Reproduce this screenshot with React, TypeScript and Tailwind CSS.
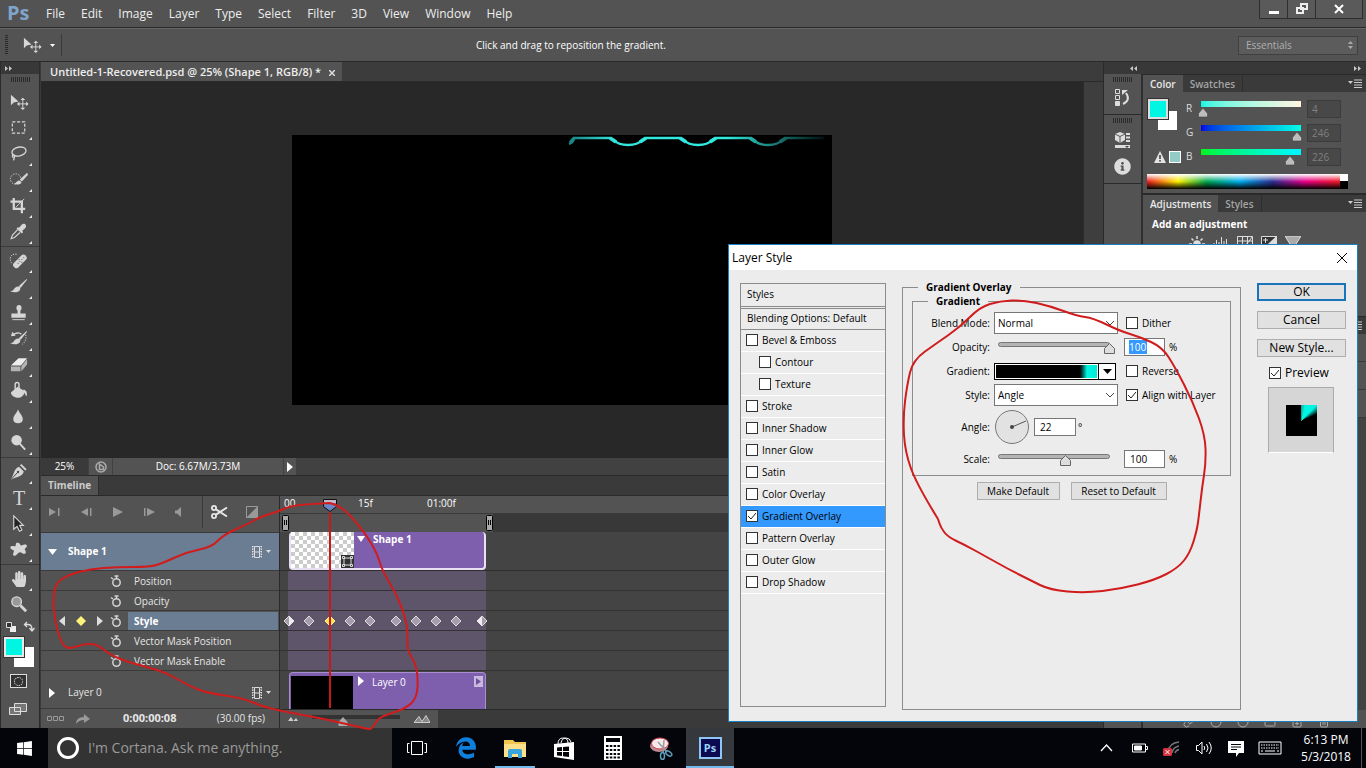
import { useState } from "react";
import type { ReactNode } from "react";
import { FaHandPaper, FaWindows, FaInfoCircle } from "react-icons/fa";
import { FaEdgeLegacy } from "react-icons/fa6";
import { Link, Trash2, Folder, FilePlus, Circle } from "lucide-react";

const menus = ["File", "Edit", "Image", "Layer", "Type", "Select", "Filter", "3D", "View", "Window", "Help"];

const effects = [
  { name: "Bevel & Emboss", sub: false },
  { name: "Contour", sub: true },
  { name: "Texture", sub: true },
  { name: "Stroke", sub: false },
  { name: "Inner Shadow", sub: false },
  { name: "Inner Glow", sub: false },
  { name: "Satin", sub: false },
  { name: "Color Overlay", sub: false },
  { name: "Gradient Overlay", sub: false },
  { name: "Pattern Overlay", sub: false },
  { name: "Outer Glow", sub: false },
  { name: "Drop Shadow", sub: false },
];

const tracks = ["Position", "Opacity", "Style", "Vector Mask Position", "Vector Mask Enable"];
const keyframes = [9, 29, 50, 70, 90, 116, 136, 156, 176, 202];

const leftLoop = [
  [330, 503], [338, 505], [350, 515], [365, 533], [377, 553], [382, 570], [395, 592], [403, 610], [408, 630],
  [407, 650], [415, 662], [418, 677], [417, 697], [407, 708], [383, 716], [377, 720], [372, 729], [367, 729],
  [330, 720], [297, 714], [263, 707], [243, 698], [207, 693], [187, 685], [167, 673], [147, 667], [128, 662],
  [110, 655], [97, 644], [83, 644], [70, 649], [62, 645], [55, 622], [53, 598], [56, 583], [68, 575], [90, 569],
  [117, 567], [150, 567], [163, 563], [187, 552], [212, 547], [223, 535], [250, 523], [260, 517], [277, 512],
  [290, 506], [310, 504], [330, 503],
];

const rightLoop = [
  [938, 519], [917, 485], [905, 452], [903, 418], [907, 385], [913, 360], [937, 343], [960, 327], [980, 307],
  [1000, 301], [1023, 300], [1050, 306], [1077, 316], [1093, 318], [1120, 331], [1140, 337], [1162, 347],
  [1175, 367], [1193, 402], [1205, 435], [1206, 462], [1202, 488], [1199, 515], [1197, 530], [1190, 553],
  [1178, 568], [1155, 580], [1120, 589], [1085, 593], [1050, 590], [1030, 580], [1010, 570], [985, 556],
  [965, 545], [948, 537], [941, 528], [938, 519],
];

// joins the points with curves through their midpoints
function smooth(points: number[][]) {
  let d = `M${points[0][0]} ${points[0][1]}`;
  for (let i = 1; i < points.length - 1; i++) {
    const [x, y] = points[i];
    const [nx, ny] = points[i + 1];
    d += ` Q${x} ${y} ${(x + nx) / 2} ${(y + ny) / 2}`;
  }
  const last = points[points.length - 1];
  return d + ` L${last[0]} ${last[1]}`;
}

const brush = (
  <>
    <path d="M18.500 2 10.500 9.500 12 11.500 19 3z" />
    <path d="M10 10c-3 0-4 1.500-5 3-1 1.200-2.500 1.600-4 1.800 4 2 8.500 1.600 10.200-.6.900-1.200.8-3-.2-4.200z" />
  </>
);

type Tool = { name: string; icon: ReactNode; plain?: boolean };

const moveIcon = (
  <>
    <path d="M2 3v11l3-3 5-1z" />
    <path d="M14.500 7v11M9 12.500h11" stroke="currentColor" strokeWidth="1" />
    <path d="M14.500 6l2.500 2.500h-5zM14.500 19l2.500-2.500h-5zM8.500 12.500l2.500-2.500v5zM20.500 12.500l-2.500-2.500v5z" />
  </>
);

const toolGroups: Tool[][] = [
  [
    { name: "Move", plain: true, icon: moveIcon },
    {
      name: "Marquee",
      icon: <rect x="3.500" y="4" width="13" height="12" fill="none" stroke="currentColor" strokeWidth="1.300" strokeDasharray="3.200 1.800" />,
    },
    {
      name: "Lasso",
      icon: (
        <g fill="none" stroke="currentColor" strokeWidth="1.400">
          <ellipse cx="10.500" cy="8" rx="7.500" ry="4.600" transform="rotate(-12 10 8)" />
          <path d="M5 11c-2 .5-2 3 0 3 1.500 0 1.500-2.500-.5-2.500M5.500 14c0 1.500 0 2.500-1 3" />
        </g>
      ),
    },
    {
      name: "Quick Selection",
      icon: (
        <>
          <circle cx="7" cy="9.500" r="5.500" fill="none" stroke="currentColor" strokeDasharray="1.400 1.400" />
          <path d="M19 3l-7.500 7 2 2L20 5z" />
          <path d="M11 11c-2.500 0-3 2-5.500 3.500 3.500 1.500 7 .7 7.700-1.300z" />
        </>
      ),
    },
    {
      name: "Crop",
      icon: (
        <>
          <path d="M5 2v11.500h12M1.500 6h12v12" fill="none" stroke="currentColor" strokeWidth="2.400" />
          <path d="M7 12L16 3" stroke="currentColor" />
        </>
      ),
    },
    {
      name: "Eyedropper",
      icon: (
        <>
          <path d="M13.500 2.500l-3 3.500-1.500-.5-1 1.500 5.500 5 1.200-1.200-.7-1.500 3.200-3c2.200-3-1.200-6-3.700-3.800z" />
          <path d="M9 8l-5.500 6-1.200 3.500 3.500-1.300L11.500 11" fill="none" stroke="currentColor" strokeWidth="1.200" />
        </>
      ),
    },
  ],
  [
    {
      name: "Healing Brush",
      icon: (
        <>
          <rect x="2.500" y="7" width="17" height="6.500" rx="2.800" transform="rotate(-45 12 10)" />
          <path d="M8 3.500C3 2.500.5 6 1.500 10c.3 2 1.300 3 2 3.500" fill="none" stroke="currentColor" strokeDasharray="1.300 1.300" />
          <path d="M9 13h1M11 11h1M13 9h1M15 7h1M13 12h1M10 9h1" stroke="#555" />
        </>
      ),
    },
    { name: "Brush", icon: brush },
    {
      name: "Clone Stamp",
      icon: (
        <>
          <path d="M9 8c-2-2-1.500-6 1.500-6S14 6 12 8v3h5.500v4.500h-15V11H9z" />
          <path d="M3.500 17.500h13" stroke="currentColor" />
        </>
      ),
    },
    {
      name: "History Brush",
      icon: (
        <>
          {brush}
          <path d="M4 6.500c3-3 7-3 9-1" fill="none" stroke="currentColor" strokeWidth="1.500" />
          <path d="M2 7.500l1.500-4.500 3.500 4z" />
          <path d="M17.500 6c1.200 4-.5 8-3.500 10" fill="none" stroke="currentColor" strokeDasharray="1.300 1.300" />
        </>
      ),
    },
    {
      name: "Eraser",
      icon: (
        <>
          <path d="M2 11L10 3.500h9L12.500 11z" fill="#eee" />
          <path d="M2 12h10v5H2zM13 11.500l6-7v5.500L13 17z" fill="#b4b4b4" />
        </>
      ),
    },
    {
      name: "Paint Bucket",
      icon: (
        <>
          <path d="M2 12l7-6 8 5c-1 3-3 6-6.500 6.500C6 18 2 15 2 12z" />
          <path d="M6.500 9V3.500c0-2.500 4-2.500 4 0V9" fill="none" stroke="currentColor" strokeWidth="1.500" />
          <path d="M15 9c3 .5 4.500 3 3.500 7-2-1-1-4-3.500-5z" />
        </>
      ),
    },
    { name: "Blur", icon: <path d="M9.500 2.500c1.500 4 5 6.500 5 10 0 3-2 4.500-5 4.500s-5-1.500-5-4.500c0-3.500 3.500-6 5-10z" /> },
    {
      name: "Dodge",
      icon: (
        <>
          <circle cx="8" cy="7.500" r="5.500" />
          <path d="M11 11l6 6.500" stroke="currentColor" strokeWidth="2" />
        </>
      ),
    },
  ],
  [
    {
      name: "Pen",
      icon: (
        <>
          <path d="M13 2l5.500 5.500-1.500 1.500L11.500 3.500z" />
          <path d="M10.500 5l5 5c-1 4-4 5-9 6.500L2 18.500 4.500 13C5.500 9 7.500 6 10.500 5z" />
          <path d="M2.500 18l6.500-7" stroke="#444" />
          <circle cx="9.500" cy="10.500" r="1.200" fill="#444" />
        </>
      ),
    },
    { name: "Type", icon: null },
    { name: "Path Selection", icon: <path d="M5 2v14l3.500-3 2.500 5 2.500-1.200-2.300-4.800H15z" fill="#222" stroke="currentColor" strokeWidth="1.200" /> },
    {
      name: "Custom Shape",
      icon: <path d="M8 3c3-1 4 2 4.500 3 2-1 6-2.500 6.300 0 .3 2-3 2.500-2 4.500 1 1.600 1.500 4-.8 4-2 0-3.500-2.500-5.500-1.500-2 1.200-2.500 3.500-5 3.500-3-.5.500-4.500-.5-5.500S1 9.500 1.500 7.500C2.300 5.500 5 7 6.500 6.500 7.700 6 6.500 3.600 8 3z" />,
    },
  ],
  [
    { name: "Hand", icon: null },
    {
      name: "Zoom",
      plain: true,
      icon: (
        <>
          <circle cx="8" cy="7" r="5" fill="#999" stroke="currentColor" strokeWidth="1.500" />
          <path d="M12 11l6 6" stroke="currentColor" strokeWidth="3" />
        </>
      ),
    },
  ],
];

function Grip() {
  return (
    <div className="flex h-[5px] gap-px">
      {Array.from({ length: 10 }, (_, i) => (
        <span key={i} className="w-px bg-[#2b2b2b]" />
      ))}
    </div>
  );
}

function ToolButton({ tool }: { tool: Tool }) {
  return (
    <button type="button" aria-label={tool.name} className="flex h-[26px] w-full items-center justify-center pl-px text-[#d6d6d6]">
      {tool.name === "Type" && <span className="w-5 text-center font-['Liberation_Serif',serif] text-xl leading-5">T</span>}
      {tool.name === "Hand" && <FaHandPaper className="h-4 w-5" />}
      {tool.icon && (
        <svg className="size-5 shrink-0" viewBox="0 0 21 21" fill="currentColor">
          {tool.icon}
        </svg>
      )}
      <svg className="mt-5 size-[3px] shrink-0" viewBox="0 0 3 3">
        {!tool.plain && <path d="M3 0v3H0z" fill="#eee" />}
      </svg>
    </button>
  );
}

function Toolbar() {
  return (
    <aside className="flex w-10 shrink-0 flex-col border-x border-[#2c2c2c] bg-[#535353]">
      <div className="flex h-3 items-center bg-[#383838] pl-1">
        <svg className="h-[5px] w-2" viewBox="0 0 8 5">
          <path d="M0 0l3 2.500L0 5zM4 0l3 2.500L4 5z" fill="#c8c8c8" />
        </svg>
      </div>
      <div className="flex h-[15px] items-start justify-center pt-[3px]">
        <Grip />
      </div>
      {toolGroups.map((group, i) => (
        <div key={i} className={i ? "mt-px border-t border-[#3a3a3a] pt-px" : ""}>
          {group.map((tool) => (
            <ToolButton key={tool.name} tool={tool} />
          ))}
        </div>
      ))}
      <div className="flex h-4 items-center justify-between px-1 pt-0.5 text-[#ddd]">
        <svg className="size-3" viewBox="0 0 12 12">
          <path d="M5 5h6v6H5z" fill="#eee" />
          <path d="M1.500 1.500h5v5h-5z" fill="#333" stroke="#ddd" />
        </svg>
        <svg className="size-3" viewBox="0 0 12 12" fill="none" stroke="currentColor" strokeWidth="1.300">
          <path d="M2 3.500h3q4 0 4 5M4 1L1.500 3.500 4 6M6.500 7L9 10l2.500-3" />
        </svg>
      </div>
      <div className="relative ml-[3px] mt-[3px] h-[30px]">
        <button type="button" aria-label="Background color" className="absolute left-2.5 top-2.5 size-5 bg-white" />
        <button type="button" aria-label="Foreground color" className="absolute left-0 top-0 size-5 border-2 border-[#e8e8e8] bg-[#00f6e2] outline outline-[#333]" />
      </div>
      <div className="mr-1 mt-[7px] flex flex-col items-center gap-3.5">
        <button type="button" aria-label="Quick mask" className="flex h-3.5 w-[17px] items-center justify-center border border-[#ddd] bg-[#333]">
          <span className="size-[9px] rounded-full border border-dotted border-white" />
        </button>
        <button type="button" aria-label="Screen mode">
          <svg className="block h-3.5 w-5" viewBox="0 0 20 14" fill="#777" stroke="#ddd">
            <path d="M6.500 1.500h12v8h-12zM1.500 5.500h11v7h-11z" />
          </svg>
        </button>
      </div>
    </aside>
  );
}

function PanelMenu() {
  return (
    <svg className="h-[9px] w-3.5" viewBox="0 0 14 9">
      <path d="M0 2h5L2.500 5z" fill="#ccc" />
      <path d="M6 1h8M6 3.500h8M6 6h8M6 8.500h8" stroke="#ccc" />
    </svg>
  );
}

function PanelTabs({ active, other }: { active: string; other: string }) {
  return (
    <div className="flex h-[18px] items-center border-t border-[#2a2a2a] bg-[#3a3a3a] pr-1 text-[10px] font-semibold leading-4">
      <button type="button" className="h-full bg-[#535353] px-[7px] text-[#e8e8e8]">{active}</button>
      <button type="button" className="h-full border-r border-[#2e2e2e] px-[7px] text-[#a4a4a4]">{other}</button>
      <span className="ml-auto"><PanelMenu /></span>
    </div>
  );
}

function ColorRow({ label, bar, start, max }: { label: string; bar: string; start: number; max: number }) {
  const [value, setValue] = useState(start);
  return (
    <div className="flex h-6 items-start">
      <label htmlFor={"color" + label} className="w-[15px] pt-0.5 text-[10px] leading-3 text-[#ddd]">{label}</label>
      <div className="relative h-4 w-[100px]">
        <div className={"mt-px h-1.5 " + bar} />
        <svg className="absolute top-2 size-2.5" style={{ left: (value / max) * 100 - 5 }} viewBox="0 0 10 10">
          <path d="M5 0l4.500 5.500V9H.5V5.500z" fill="#bdbdbd" stroke="#444" strokeWidth=".6" />
        </svg>
        <input type="range" id={"color" + label} min="0" max={max} value={value} onChange={(e) => setValue(parseInt(e.target.value))} className="absolute inset-0 w-full opacity-0" />
      </div>
      <input
        type="text"
        aria-label={label + " value"}
        value={value}
        onChange={(e) => setValue(parseInt(e.target.value) || 0)}
        className="ml-1.5 h-[18px] w-[34px] border border-[#3c3c3c] bg-[#484848] pl-1 text-[10px] text-[#808080]"
      />
    </div>
  );
}

function Dock() {
  return (
    <aside className="flex w-[263px] shrink-0 flex-col border-l border-[#2a2a2a] bg-[#2e2e2e]">
      <div className="flex h-3 items-center bg-[#383838]">
        <svg className="ml-[26px] h-[5px] w-2" viewBox="0 0 8 5">
          <path d="M3 0L0 2.500 3 5zM7 0L4 2.500 7 5z" fill="#c8c8c8" />
        </svg>
        <svg className="ml-auto mr-1 h-[5px] w-2" viewBox="0 0 8 5">
          <path d="M0 0l3 2.500L0 5zM4 0l3 2.500L4 5z" fill="#c8c8c8" />
        </svg>
      </div>
      <div className="flex min-h-0 flex-1 gap-0.5">
        <div className="flex w-[37px] flex-col bg-[#535353]">
          <div className="flex h-[41px] flex-col items-center gap-[7px] border-b border-[#2a2a2a] pt-[3px]">
            <Grip />
            <svg className="h-[17px] w-[15px]" viewBox="0 0 15 17" fill="none" stroke="#ddd">
              <path d="M.5.500h4v4h-4zM.5 6.500h4v4h-4z" />
              <path d="M.5 12.500h4v4h-4z" fill="#ddd" />
              <path d="M8 15q8-4 3-11" strokeWidth="2" />
              <path d="M7 6V1h6z" fill="#ddd" stroke="none" />
            </svg>
          </div>
          <div className="flex h-[69px] flex-col items-center gap-[9px] border-b border-[#2a2a2a] pt-[3px]">
            <Grip />
            <svg className="h-[17px] w-4 shrink-0" viewBox="0 0 16 17" fill="#ddd">
              <path d="M5 0l5 2v6l-5 3-5-3V2z" />
              <path d="M0 2l5 2.500L10 2M5 4.500V11" fill="none" stroke="#555" />
              <path d="M11 1h4v2h-4zM11 4.500h4v2h-4zM11 8h4v2h-4zM0 13h15v3H0z" />
              <path d="M10 14h4l-2 2z" fill="#444" />
            </svg>
            <FaInfoCircle className="size-[17px] shrink-0 text-[#ddd]" />
          </div>
        </div>
        <div className="flex min-w-0 flex-1 flex-col bg-[#535353]">
          <PanelTabs active="Color" other="Swatches" />
          <div className="flex h-[101px] flex-col pl-1 pt-1.5">
            <div className="flex pt-px">
              <div className="h-[72px] w-[39px]">
                <div className="relative ml-px h-[30px]">
                  <span className="absolute left-2.5 top-3 size-[19px] bg-white" />
                  <span className="absolute left-0 top-0 size-5 border-2 border-[#ddd] bg-[#00f6e2] outline outline-[#333]" />
                </div>
                <div className="ml-[7px] mt-[22px] flex items-center gap-[3px]">
                  <svg className="size-3" viewBox="0 0 12 12">
                    <path d="M6 0l6 12H0z" fill="#e4e4e4" />
                    <path d="M6 4v4M6 9v1.500" stroke="#333" strokeWidth="1.500" />
                  </svg>
                  <span className="size-3 border border-white bg-[#93ccc6]" />
                </div>
              </div>
              <div className="pt-px">
                <ColorRow label="R" start={4} max={255} bar="bg-linear-to-r from-[#00f6e2] to-[#fff6e2]" />
                <ColorRow label="G" start={246} max={255} bar="bg-linear-to-r from-[#0400e2] to-[#04ffe2]" />
                <ColorRow label="B" start={226} max={255} bar="bg-linear-to-r from-[#04f600] to-[#04f6ff]" />
              </div>
            </div>
            <div className="mt-0.5 flex h-[15px] w-[201px]">
              <div className="flex-1 bg-[linear-gradient(to_bottom,#fff,transparent_50%,#000),linear-gradient(to_right,#ed1c24,#fff200_16%,#00a651_31%,#00aeef_48%,#2e3192_65%,#ec008c_82%,#ed1c24)]" />
              <div className="w-2 bg-linear-to-b from-white from-50% to-black to-50%" />
            </div>
          </div>
          <div className="border-t border-[#2a2a2a]">
            <PanelTabs active="Adjustments" other="Styles" />
          </div>
          <div className="h-[104px] pl-[9px] pt-1">
            <h3 className="text-[10px] font-bold leading-4 text-white">Add an adjustment</h3>
            <div className="mt-1 flex gap-2 pl-[37px] text-[#ddd]">
              <svg className="size-4" viewBox="0 0 16 16" stroke="currentColor" strokeWidth="1.500">
                <circle cx="8" cy="8" r="3" fill="currentColor" />
                <path d="M8 0v3M8 13v3M0 8h3M13 8h3M2.500 2.500l2 2M13.500 2.500l-2 2M2.500 13.500l2-2M13.500 13.500l-2-2" />
              </svg>
              <svg className="size-4" viewBox="0 0 16 16" stroke="currentColor">
                <path d="M1 14V7M3.500 14V4M6 14V6M8.500 14V1M11 14V5M13.500 14V3" />
              </svg>
              <svg className="size-4" viewBox="0 0 16 16" fill="none" stroke="currentColor">
                <path d="M.5.500h15v14H.5zM5.500 0v15M10.500 0v15M0 5h16M1 13Q9 11 15 1" />
              </svg>
              <svg className="size-4" viewBox="0 0 16 16">
                <path d="M.5.500h15v14H.5z" fill="#333" stroke="currentColor" />
                <path d="M16 0v15H0zM2 4h5M4.500 2v5" fill="currentColor" stroke="currentColor" />
              </svg>
              <svg className="size-4" viewBox="0 0 16 16">
                <path d="M0 0h16L8 13z" fill="#aaa" stroke="currentColor" />
              </svg>
            </div>
          </div>
          <div className="flex h-[18px] items-center justify-end border-t border-[#2a2a2a] bg-[#3a3a3a] pr-1">
            <PanelMenu />
          </div>
          <div className="h-7 border-b border-[#3a3a3a]" />
          <div className="h-7 border-b border-[#3a3a3a]" />
          <div className="h-7 border-b border-[#3a3a3a]" />
          <div className="flex-1 bg-[#434343]" />
          <div className="flex h-[18px] items-end gap-[15px] pl-10 text-[#aaa]">
            <Link className="size-3" />
            <Circle className="size-3" />
            <Circle className="size-3" />
            <Folder className="size-3" />
            <FilePlus className="size-3" />
            <Trash2 className="size-3" />
          </div>
        </div>
      </div>
    </aside>
  );
}

function Stopwatch() {
  return (
    <svg className="size-3 shrink-0" viewBox="0 0 12 12" fill="none" stroke="#d4d4d4" strokeWidth="1.500">
      <circle cx="6.500" cy="7.500" r="3.700" />
      <path d="M6.500 1.500v2M4.500 1h4M1 2.500l2 1.500" />
    </svg>
  );
}

function FilmMenu() {
  return (
    <span className="ml-auto flex items-center gap-1 pr-2">
      <svg className="h-3 w-2.5" viewBox="0 0 10 12" fill="none" stroke="#ddd">
        <path d="M2.500.500h5v11h-5zM2.500 6h5" />
        <path d="M.5 0v12M9.500 0v12" strokeDasharray="1.500 1" />
        <path d="M1.500 0v12M8.500 0v12" stroke="#bbb" strokeDasharray="1 1.500" />
      </svg>
      <svg className="h-[3px] w-[5px]" viewBox="0 0 5 3"><path d="M0 0h5L2.500 3z" fill="#ddd" /></svg>
    </span>
  );
}

function WorkAreaHandle() {
  return (
    <svg className="h-4 w-[7px]" viewBox="0 0 7 16">
      <rect x=".5" y=".5" width="6" height="15" rx="1" fill="#aaa" stroke="#000" />
      <path d="M2.500 5v5M4.500 5v5" stroke="#000" />
    </svg>
  );
}

function Timeline() {
  return (
    <section className="shrink-0 border-t border-[#2a2a2a] bg-[#444]">
      <div className="flex h-5 border-b border-[#2a2a2a] bg-[#3a3a3a]">
        <button type="button" className="border-r border-[#2e2e2e] bg-[#535353] px-[7px] text-[10px] font-bold text-[#ccc]">Timeline</button>
      </div>
      <div className="flex">
        <div className="w-[239px] shrink-0 border-r border-[#2a2a2a] bg-[#535353] text-[10px] text-[#e6e6e6]">
          <div className="flex h-9 items-center pb-1">
            <div className="flex h-full w-[162px] items-center justify-between border-r border-[#3a3a3a] pl-2 pr-4">
              {["M0 1l7 4-7 4zM9 1h1.500v8H9z", "M8 1L1 5l7 4zM10 1h1.500v8H10z", "M1 0l10 5-10 5z", "M1 1h1.500v8H1zM4 1l8 4-8 4z", "M1 3.500h2L7 0v10L3 6.500H1z"].map((d) => (
                <button key={d} type="button" aria-label="Playback">
                  <svg className="h-2.5 w-3" viewBox="0 0 12 10"><path d={d} fill="#999" /></svg>
                </button>
              ))}
            </div>
            <svg className="ml-2 h-3.5 w-[17px]" viewBox="0 0 17 14" fill="none" stroke="#e6e6e6" strokeWidth="1.800">
              <circle cx="3" cy="3" r="2.100" />
              <circle cx="3" cy="11" r="2.100" />
              <path d="M5 4.300L16 11.500M5 9.700L16 2.500" strokeWidth="2" />
            </svg>
            <svg className="ml-[18px] size-3" viewBox="0 0 12 12">
              <path d="M.5.500h11v11H.5z" fill="none" stroke="#999" />
              <path d="M12 0v12H0z" fill="#999" />
            </svg>
          </div>
          <div className="flex h-[39px] items-center border-y border-[#3a3a3a] bg-[#6b7d92] pl-[7px]">
            <svg className="h-1.5 w-2.5" viewBox="0 0 10 6"><path d="M0 0h9L4.500 6z" fill="#fff" /></svg>
            <span className="ml-2.5 font-bold text-white">Shape 1</span>
            <FilmMenu />
          </div>
          {tracks.map((track) => (
            <div key={track} className="flex h-5 items-center border-b border-[#3a3a3a]">
              <div className="flex w-[69px] shrink-0 items-center gap-[11px] pl-[18px]">
                {track === "Style" && (
                  <>
                    <svg className="h-2.5 w-1.5 shrink-0" viewBox="0 0 6 10"><path d="M6 0v10L0 5z" fill="#ddd" /></svg>
                    <svg className="size-2.5 shrink-0" viewBox="0 0 10 10"><path d="M5 0l5 5-5 5-5-5z" fill="#fff27a" /></svg>
                    <svg className="h-2.5 w-1.5 shrink-0" viewBox="0 0 6 10"><path d="M0 0v10l6-5z" fill="#ddd" /></svg>
                  </>
                )}
              </div>
              <Stopwatch />
              <span className={track === "Style" ? "ml-1.5 mr-px flex-1 bg-[#6b7d92] pl-1.5 font-bold leading-[18px] text-white" : "ml-3 pt-px"}>{track}</span>
            </div>
          ))}
          <div className="flex h-[38px] items-center border-b border-[#3a3a3a] pl-2 pt-1.5">
            <svg className="h-2.5 w-1.5" viewBox="0 0 6 10"><path d="M0 0v10l6-5z" fill="#fff" /></svg>
            <span className="ml-[13px]">Layer 0</span>
            <FilmMenu />
          </div>
          <div className="flex h-[19px] items-center pl-1.5">
            <svg className="h-[5px] w-[17px]" viewBox="0 0 17 5" fill="none" stroke="#999">
              <path d="M.5.500h4v4h-4zM6.500.500h4v4h-4zM12.500.500h4v4h-4z" />
            </svg>
            <svg className="ml-3 h-2.5 w-3.5" viewBox="0 0 14 10"><path d="M0 10q0-7 8-7V0l6 5-6 4V6Q3 6 0 10z" fill="#999" /></svg>
            <span className="ml-[33px] text-[11px] font-bold">0:00:00:08</span>
            <span className="ml-auto pr-3.5">(30.00 fps)</span>
          </div>
        </div>
        <div className="relative min-w-0 flex-1 text-[10px] text-white">
          <div className="flex h-[18px] border-b border-[#3a3a3a] bg-[#535353] pl-1 leading-[14px]">
            <span className="w-[74px]">00</span>
            <span className="w-[69px]">15f</span>
            <span>01:00f</span>
          </div>
          <div className="flex h-[18px] bg-[#383838]">
            <div className="flex w-[213px] items-center justify-between bg-[#535353] pl-0.5">
              <WorkAreaHandle />
              <WorkAreaHandle />
            </div>
          </div>
          <div className="flex h-[39px] items-start border-b border-[#2e2e2e] pl-[9px]">
            <div className="flex h-[38px] w-[197px] items-start rounded border-2 border-t-0 border-[#e9e0f5] bg-[#7e5fae]">
              <div className="flex h-full w-[63px] items-end justify-end bg-white bg-[conic-gradient(#ccc_25%,#fff_0_50%,#ccc_0_75%,#fff_0)] bg-size-[8px_8px]">
                <svg className="size-[13px]" viewBox="0 0 13 13">
                  <path d="M0 0h13v13H0z" fill="#333" />
                  <path d="M3 3h7v7H3zM1.500 1.500h2v2h-2zM9.500 1.500h2v2h-2zM1.500 9.500h2v2h-2zM9.500 9.500h2v2h-2z" fill="none" stroke="#ddd" />
                </svg>
              </div>
              <svg className="ml-[3px] mt-1 h-1.5 w-2" viewBox="0 0 8 6"><path d="M0 0h8L4 6z" fill="#fff" /></svg>
              <span className="ml-2 font-bold leading-[15px]">Shape 1</span>
            </div>
          </div>
          {tracks.map((track) => (
            <div key={track} className="relative h-5 border-b border-[#333] pl-2">
              <div className="h-[19px] w-[198px] bg-[#5f556b]" />
              {track === "Style" &&
                keyframes.map((x, i) => (
                  <svg key={x} className="absolute top-1 size-3" style={{ left: x - 6 }} viewBox="0 0 12 12">
                    <path d="M6 1L11 6 6 11 1 6z" fill={i === 2 ? "#ffe24a" : "#a59cae"} stroke={i === 2 ? "#fff3a0" : "#ddd"} />
                    {i === 0 && <path d="M6 1l5 5-5 5z" fill="#eee" />}
                    {i === 9 && <path d="M6 1L1 6l5 5z" fill="#eee" />}
                  </svg>
                ))}
            </div>
          ))}
          <div className="flex h-[38px] items-start pl-[9px] pt-px">
            <div className="flex h-[37px] w-[197px] items-start rounded-t border border-b-0 border-[#a98fd0] bg-[#7e5fae] pl-px pt-[3px]">
              <div className="h-full w-[62px] bg-black" />
              <svg className="ml-[5px] h-2.5 w-1.5" viewBox="0 0 6 10"><path d="M0 0v10l6-5z" fill="#fff" /></svg>
              <span className="ml-2 leading-3">Layer 0</span>
              <svg className="ml-auto mr-0.5 h-[11px] w-[9px]" viewBox="0 0 9 11">
                <path d="M0 0h9v11H0z" fill="#c9b9df" />
                <path d="M2 2v7l5-3.500z" fill="#6c529a" />
              </svg>
            </div>
          </div>
          <div className="flex h-[19px] border-t border-[#2a2a2a] bg-[#3a3a3a]">
            <div className="flex w-[158px] items-center gap-3.5 bg-[#535353] pl-2">
              <svg className="h-1 w-2.5" viewBox="0 0 10 4"><path d="M0 4l3-4 2.500 4L8 1l2 3z" fill="#ccc" /></svg>
              <div className="relative mb-1 h-1 w-[88px] bg-[#333]">
                <svg className="absolute left-[26px] top-0.5 size-2.5" viewBox="0 0 10 10"><path d="M5 0l4.500 5v4H.5V5z" fill="#aaa" /></svg>
              </div>
              <svg className="h-2 w-4 shrink-0" viewBox="0 0 16 8" fill="#888" stroke="#ccc"><path d="M0 7.500l5-6 3 5 4-6 4 7z" /></svg>
            </div>
          </div>
          <div className="absolute left-[43px] top-[3px] flex w-3.5 flex-col items-center">
            <svg className="h-[13px] w-3.5" viewBox="0 0 14 13">
              <path d="M.5.500h13v7l-6.500 5-6.500-5z" fill="#6a86c4" stroke="#111" />
              <path d="M1 1h12v3H1z" fill="#c4b8cf" />
            </svg>
            <div className="h-[196px] w-0.5 bg-[#c41a1a]" />
          </div>
        </div>
      </div>
    </section>
  );
}

function Workspace() {
  return (
    <main className="flex min-w-0 flex-1 flex-col bg-[#3a3a3a] pl-px">
      <div className="flex h-5 shrink-0 items-stretch border-b border-[#2a2a2a] bg-[#3c3c3c]">
        <div className="flex items-center gap-2 bg-[#535353] pl-[9px] pr-[7px] pt-0.5">
          <span className="text-[11px] font-semibold text-[#eee]">Untitled-1-Recovered.psd @ 25% (Shape 1, RGB/8) *</span>
          <button type="button" aria-label="Close document">
            <svg className="size-1.5" viewBox="0 0 6 6"><path d="M0 0l6 6M6 0L0 6" stroke="#ddd" strokeWidth="1.500" /></svg>
          </button>
        </div>
      </div>
      <div className="flex min-h-0 flex-1">
        <div className="flex flex-1 items-center justify-center bg-[#282828]">
          <div className="h-[270px] w-[540px] bg-black">
            <svg className="ml-auto h-5 w-[270px]" viewBox="0 0 270 20">
              <defs>
                <linearGradient id="chain" gradientUnits="userSpaceOnUse" x1="7" y1="0" x2="262" y2="0">
                  <stop offset="0" stopColor="#17827f" />
                  <stop offset=".18" stopColor="#33e6dc" />
                  <stop offset=".62" stopColor="#2feade" />
                  <stop offset=".78" stopColor="#1d8a84" />
                  <stop offset="1" stopColor="#001010" />
                </linearGradient>
              </defs>
              <g fill="none" stroke="url(#chain)" strokeWidth="2.300">
                <path d="M7 9q4-1 5-6h36l4 2q4 5 14 5t14-5l4-2h34l4 2q4 5 14 5t14-5l4-2h34l4 2q4 5 14 5t14-5l4-2h38" />
                <path d="M12 3l-4 5M48 3l6 4M84 3l-6 4M118 3l6 4M154 3l-6 4M188 3l6 4M224 3l-6 4" strokeWidth="3.500" />
              </g>
            </svg>
          </div>
        </div>
        <div className="w-5 border-l border-[#2c2c2c] bg-[#3e3e3e]" />
      </div>
      <div className="flex h-[17px] shrink-0 gap-px bg-[#414141] text-[10px] text-white">
        <input type="text" aria-label="Zoom" defaultValue="25%" className="w-[47px] bg-[#3a3a3a] text-center" />
        <span className="flex w-[23px] items-center justify-center bg-[#535353]">
          <svg className="size-3" viewBox="0 0 12 12" fill="none" stroke="#aaa" strokeWidth="1.500"><circle cx="6" cy="6" r="5" /><path d="M4.500 3v5.500h4V6z" /></svg>
        </span>
        <span className="w-[170px] bg-[#535353] text-center leading-4">Doc: 6.67M/3.73M</span>
        <button type="button" aria-label="Status menu" className="flex w-3 items-center justify-center bg-[#535353]">
          <svg className="h-2.5 w-1.5" viewBox="0 0 6 10"><path d="M0 0v10l6-5z" fill="#fff" /></svg>
        </button>
      </div>
      <Timeline />
    </main>
  );
}

function CheckBox({ id, label, checked, onChange }: { id: string; label: string; checked: boolean; onChange: () => void }) {
  return (
    <span className="flex items-center gap-1">
      <span className="relative flex size-3 shrink-0">
        <input type="checkbox" id={id} checked={checked} onChange={onChange} className="size-3 appearance-none border border-[#333] bg-white" />
        {checked && (
          <svg className="pointer-events-none absolute inset-0.5 size-2" viewBox="0 0 8 8" fill="none" stroke="#222">
            <path d="M0 4l3 3 5-6" />
          </svg>
        )}
      </span>
      <label htmlFor={id} className="whitespace-nowrap">{label}</label>
    </span>
  );
}

function Slider({ id, value, max, onChange }: { id: string; value: number; max: number; onChange: (v: number) => void }) {
  return (
    <div className="relative ml-1 mr-2 h-4 flex-1">
      <div className="mt-[3px] h-[5px] rounded-full border border-[#777] bg-[#b4b4b4]" />
      <svg className="absolute top-1 size-[11px]" style={{ left: (value / max) * 112 - 6 }} viewBox="0 0 11 11">
        <path d="M5.500.500l5 5v5H.5v-5z" fill="#ddd" stroke="#666" />
      </svg>
      <input type="range" id={id} min="0" max={max} value={value} onChange={(e) => onChange(parseInt(e.target.value))} className="absolute inset-0 w-full opacity-0" />
    </div>
  );
}

function Row({ label, htmlFor, children, extra }: { label: string; htmlFor: string; children: ReactNode; extra?: ReactNode }) {
  return (
    <div className="flex h-6 items-center">
      <label htmlFor={htmlFor} className="w-[77px] shrink-0 text-right">{label}</label>
      <div className="ml-1 flex w-[124px] shrink-0 items-center">{children}</div>
      <div className="ml-1.5 flex items-center gap-1">{extra}</div>
    </div>
  );
}

function Select({ id, options }: { id: string; options: string[] }) {
  return (
    <span className="relative w-full">
      <select id={id} className="block h-[22px] w-full appearance-none border border-[#777] bg-white px-[3px]">
        {options.map((o) => (
          <option key={o}>{o}</option>
        ))}
      </select>
      <svg className="pointer-events-none absolute right-1 top-2 h-1.5 w-2" viewBox="0 0 8 6" fill="none" stroke="#444"><path d="M0 1l4 4 4-4" /></svg>
    </span>
  );
}

function LayerStyleDialog() {
  const [checked, setChecked] = useState(["Gradient Overlay"]);
  const [opacity, setOpacity] = useState(100);
  const [scale, setScale] = useState(100);
  const [angle, setAngle] = useState("22");
  const [dither, setDither] = useState(false);
  const [reverse, setReverse] = useState(false);
  const [align, setAlign] = useState(true);
  const [preview, setPreview] = useState(true);

  const toggle = (name: string) => {
    setChecked(checked.includes(name) ? checked.filter((n) => n !== name) : [...checked, name]);
  };

  return (
    <div role="dialog" aria-label="Layer Style" className="absolute right-2 top-[244px] flex h-[478px] w-[630px] flex-col border border-[#1a7fc0] bg-[#ececec] text-[10px] leading-[14px] text-black">
      <div className="flex h-[25px] shrink-0 items-center justify-between bg-white pl-[3px] pr-2.5">
        <h2 className="text-xs">Layer Style</h2>
        <button type="button" aria-label="Close">
          <svg className="size-2.5" viewBox="0 0 10 10"><path d="M0 0l10 10M10 0L0 10" stroke="#000" /></svg>
        </button>
      </div>
      <div className="flex flex-1 items-start gap-4 pl-[11px] pr-[11px] pt-2.5">
        <div className="mt-[3px] h-[424px] w-[146px] border border-[#8c8c8c]">
          <div className="h-[23px] border-b border-[#8c8c8c] pl-1.5 leading-5">Styles</div>
          <div className="mt-px h-[22px] border-y border-[#8c8c8c] pl-1.5 leading-[18px]">Blending Options: Default</div>
          <ul>
            {effects.map((effect) => (
              <li
                key={effect.name}
                className={
                  "flex h-[22px] items-center border-b border-white pb-0.5 " +
                  (effect.sub ? "pl-[18px] " : "pl-[5px] ") +
                  (effect.name === "Gradient Overlay" ? "bg-[#3399ff]" : "")
                }
              >
                <CheckBox id={effect.name} label={effect.name} checked={checked.includes(effect.name)} onChange={() => toggle(effect.name)} />
              </li>
            ))}
          </ul>
        </div>
        <fieldset className="h-[430px] w-[339px] border border-[#8c8c8c] px-[9px]">
          <legend className="ml-1.5 px-2 font-bold">Gradient Overlay</legend>
          <fieldset className="h-[182px] border border-[#8c8c8c]">
            <legend className="ml-[15px] px-2 font-bold">Gradient</legend>
            <div className="pt-[3px]">
              <Row label="Blend Mode:" htmlFor="blend" extra={<span className="pl-0.5"><CheckBox id="dither" label="Dither" checked={dither} onChange={() => setDither(!dither)} /></span>}>
                <Select id="blend" options={["Normal", "Multiply", "Screen"]} />
              </Row>
              <Row
                label="Opacity:"
                htmlFor="opacity"
                extra={
                  <>
                    <span className="flex h-[18px] w-[41px] items-center border border-[#777] bg-white pl-1">
                      <input type="text" aria-label="Opacity value" value={opacity} onChange={(e) => setOpacity(parseInt(e.target.value) || 0)} className="w-[18px] bg-[#3399ff] text-white" />
                    </span>
                    %
                  </>
                }
              >
                <Slider id="opacity" value={opacity} max={100} onChange={setOpacity} />
              </Row>
              <Row label="Gradient:" htmlFor="gradient" extra={<span className="pl-0.5"><CheckBox id="reverse" label="Reverse" checked={reverse} onChange={() => setReverse(!reverse)} /></span>}>
                <button type="button" id="gradient" className="flex h-[17px] w-[122px] border border-black bg-white">
                  <span className="m-px h-[13px] flex-1 bg-linear-to-r from-black from-82% via-[#00f6e2] via-90% to-[#00e8d8]" />
                  <span className="flex h-full w-[17px] items-center justify-center border-l border-black">
                    <svg className="h-[5px] w-[9px]" viewBox="0 0 9 5"><path d="M0 0h9L4.500 5z" /></svg>
                  </span>
                </button>
              </Row>
              <Row label="Style:" htmlFor="style" extra={<span className="pl-0.5"><CheckBox id="align" label="Align with Layer" checked={align} onChange={() => setAlign(!align)} /></span>}>
                <Select id="style" options={["Angle", "Linear", "Radial"]} />
              </Row>
              <div className="flex h-10 items-center">
                <label htmlFor="angle" className="w-[77px] text-right">Angle:</label>
                <svg className="ml-[5px] size-[34px]" viewBox="0 0 34 34">
                  <circle cx="17" cy="17" r="16.500" fill="#e2e2e2" stroke="#777" />
                  <path d="M17 17l14-6" stroke="#555" />
                  <circle cx="17" cy="17" r="2" fill="#444" />
                </svg>
                <input type="text" id="angle" value={angle} onChange={(e) => setAngle(e.target.value)} className="ml-[5px] h-[18px] w-[42px] border border-[#777] bg-white pl-[5px]" />
                <span className="ml-0.5">°</span>
              </div>
              <Row
                label="Scale:"
                htmlFor="scale"
                extra={
                  <>
                    <input type="text" aria-label="Scale value" value={scale} onChange={(e) => setScale(parseInt(e.target.value) || 0)} className="h-[18px] w-[41px] border border-[#777] bg-white pl-[5px]" />
                    %
                  </>
                }
              >
                <Slider id="scale" value={scale} max={164} onChange={setScale} />
              </Row>
            </div>
          </fieldset>
          <div className="mt-1.5 flex justify-center gap-[11px]">
            <button type="button" className="h-[18px] w-[83px] border border-[#adadad] bg-[#e1e1e1]">Make Default</button>
            <button type="button" className="h-[18px] w-24 border border-[#adadad] bg-[#e1e1e1]">Reset to Default</button>
          </div>
        </fieldset>
        <div className="mt-[3px] flex w-[89px] flex-col gap-2.5 text-xs leading-4">
          <button type="button" className="h-[18px] border-2 border-[#1a74b8] bg-[#e1e1e1] leading-3">OK</button>
          <button type="button" className="h-[18px] border border-[#adadad] bg-[#e1e1e1]">Cancel</button>
          <button type="button" className="h-[18px] border border-[#adadad] bg-[#e1e1e1]">New Style...</button>
          <div className="-mt-0.5 pl-3">
            <CheckBox id="preview" label="Preview" checked={preview} onChange={() => setPreview(!preview)} />
          </div>
          <div className="-mt-1 ml-[11px] flex size-[66px] items-center justify-center border border-b-white border-l-[#aaa] border-r-[#aaa] border-t-[#aaa] bg-[#d6d6d6]">
            {preview && <div className="size-[31px] bg-[conic-gradient(#12a89b_0deg,#00f6e2_14deg,#00f6e2_44deg,#000_68deg,#000)]" />}
          </div>
        </div>
      </div>
    </div>
  );
}

function Taskbar() {
  return (
    <footer className="flex h-10 shrink-0 bg-[#03050b] text-white">
      <button type="button" aria-label="Start" className="flex w-12 items-center justify-center">
        <FaWindows className="size-[17px]" />
      </button>
      <div className="flex w-[344px] items-center gap-[9px] bg-[#333] pl-[9px]">
        <span className="size-[22px] shrink-0 rounded-full border-[3px] border-white" />
        <input type="text" aria-label="Search" placeholder="I'm Cortana. Ask me anything." className="flex-1 text-sm placeholder:text-[#9a9a9a]" />
      </div>
      <button type="button" aria-label="Task view" className="flex w-[49px] items-center justify-center">
        <svg className="h-3.5 w-5" viewBox="0 0 20 14" fill="none" stroke="#fff"><path d="M4.500.500h11v13h-11zM2.500 2.500h-2v9h2M17.500 2.500h2v9h-2" /></svg>
      </button>
      <button type="button" aria-label="Edge" className="flex w-[49px] items-center justify-center text-[#0f7fdc]">
        <FaEdgeLegacy className="size-[22px]" />
      </button>
      <button type="button" aria-label="File Explorer" className="flex w-[49px] items-center justify-center">
        <span className="flex h-full w-10 items-center justify-center border-b-2 border-[#76b9ed] pt-0.5">
          <svg className="h-[19px] w-[22px]" viewBox="0 0 22 19">
            <path d="M0 1h9l2 2h11v15H0z" fill="#f0c551" />
            <path d="M0 5h22v13H0z" fill="#fbe08a" />
            <path d="M4 19v-7q0-2 2-2h10q2 0 2 2v7h-4v-4H8v4z" fill="#3aa5dd" />
          </svg>
        </span>
      </button>
      <button type="button" aria-label="Store" className="flex w-[49px] items-center justify-center">
        <svg className="h-[23px] w-[22px]" viewBox="0 0 22 23">
          <path d="M1 7l20-2v18L1 20z" fill="#fff" />
          <path d="M5 7q0-6 5-6t5 5M8 6q1-5 5-5t5 4" fill="none" stroke="#fff" />
          <path d="M4 10.500l5-.5v4H4zM10 10l6-.5V14h-6zM4 15h5v4l-5-.5zM10 15h6v5l-6-.7z" fill="#03050b" />
        </svg>
      </button>
      <button type="button" aria-label="Calculator" className="flex w-[49px] items-center justify-center">
        <svg className="h-6 w-[18px]" viewBox="0 0 18 24">
          <path d="M0 0h18v24H0z" fill="#fff" />
          <path d="M2 2h14v4H2z" fill="#03050b" />
          <path d="M2 10h14M2 14h14M2 18h14M2 21.500h14" stroke="#03050b" strokeWidth="2" strokeDasharray="2.500 1.300" />
        </svg>
      </button>
      <button type="button" aria-label="Snipping Tool" className="flex w-[49px] items-center justify-center">
        <svg className="size-[23px]" viewBox="0 0 23 23" fill="none">
          <ellipse cx="9" cy="9" rx="9" ry="6" fill="#b98a90" />
          <ellipse cx="10" cy="6.500" rx="8.500" ry="5.500" fill="#f8e9ea" stroke="#d33b4c" />
          <path d="M8 5l9 10M14 3l-1 13" stroke="#999" strokeWidth="1.500" />
          <ellipse cx="12.500" cy="19" rx="2" ry="3.500" stroke="#5ea0bd" strokeWidth="1.500" />
          <ellipse cx="19" cy="16.500" rx="3.500" ry="2" stroke="#5ea0bd" strokeWidth="1.500" transform="rotate(35 19 16)" />
        </svg>
      </button>
      <button type="button" aria-label="Photoshop" className="flex w-12 items-center justify-center border-b-2 border-[#76b9ed] bg-[#35383c] pt-0.5">
        <span className="flex h-[22px] w-[23px] items-center justify-center border-2 border-[#8ec5f5] bg-[#0b0a50] text-[11px] font-bold text-[#9cd0fb]">Ps</span>
      </button>
      <div className="ml-auto flex items-center">
        <div className="flex items-center gap-3">
          <svg className="h-2 w-5" viewBox="-2 0 20 8" fill="none" stroke="#fff" strokeWidth="1.300"><path d="M1 7l5.500-6L12 7" /></svg>
          <svg className="h-2.5 w-5" viewBox="0 0 20 10" fill="none" stroke="#fff"><path d="M2.500 1h13v8h-13zM16 3.500h1.500v3H16" /><path d="M4.500 3h7v4h-7z" fill="#fff" /></svg>
          <svg className="size-5" viewBox="0 0 20 20" fill="none" stroke="#777" strokeWidth="1.500">
            <path d="M6 14Q7 5 17 4M10 15q1-6 7-7M13 15q1-3 4-3.500" />
            <rect x="1" y="10" width="9" height="8" rx="1.500" fill="#d23440" stroke="none" />
            <path d="M3.500 12l4 4M7.500 12l-4 4" stroke="#fff" strokeWidth="1" />
          </svg>
          <svg className="size-5" viewBox="0 0 20 20" fill="none" stroke="#fff"><path d="M2.500 7.500h2L8 4v12l-3.500-3.500h-2zM10 8q1.500 2 0 4M12.500 6q3 4 0 8M15 4q4.500 6 0 12" /></svg>
          <svg className="size-5" viewBox="0 0 20 20"><path d="M2 3h16v12h-5l-3 4v-4H2z" fill="#fff" /><path d="M5 6.500h10M5 9h10M5 11.500h6" stroke="#03050b" /></svg>
          <svg className="h-3.5 w-6" viewBox="0 0 24 14" fill="none" stroke="#fff"><path d="M1 1h22v12H1z" /><path d="M3 4h18M3 7h18" strokeDasharray="1.500 1" /><path d="M3 10h2M7 10h10M19 10h2" /></svg>
        </div>
        <div className="ml-[17px] flex w-[54px] flex-col items-center text-xs leading-[17px]">
          <span>6:13 PM</span>
          <span>5/3/2018</span>
        </div>
        <span className="ml-2 h-full w-[5px] border-l border-[#555]" />
      </div>
    </footer>
  );
}

export default function App() {
  return (
    <div className="relative flex h-screen min-h-[760px] flex-col overflow-hidden bg-[#535353] font-['Open_Sans','Noto_Sans',sans-serif]">
      <header className="flex h-7 shrink-0 items-start border-b border-[#2a2a2a]">
        <span className="w-[38px] pl-[7px] text-xl font-bold leading-[26px] text-[#7fa3c9]">Ps</span>
        <nav className="flex pt-1.5 text-xs leading-4 text-[#eee]">
          {menus.map((menu) => (
            <button key={menu} type="button" className="px-2">{menu}</button>
          ))}
        </nav>
        <div className="ml-auto mr-[3px] flex h-[19px] border border-t-0 border-[#2e2e2e] bg-[#5a5a5a]">
          <button type="button" aria-label="Minimize" className="flex w-7 items-center justify-center border-r border-[#2e2e2e] pt-1.5">
            <span className="h-[3px] w-2.5 bg-white" />
          </button>
          <button type="button" aria-label="Restore" className="flex w-7 items-center justify-center border-r border-[#2e2e2e]">
            <svg className="size-3" viewBox="0 0 12 12" fill="none" stroke="#eee" strokeWidth="2"><path d="M5 1h6v5H5zM1 5h6v5H1z" /></svg>
          </button>
          <button type="button" aria-label="Close" className="flex w-[46px] items-center justify-center">
            <svg className="size-2.5" viewBox="0 0 10 10" stroke="#fff" strokeWidth="2"><path d="M1 1l8 8M9 1L1 9" /></svg>
          </button>
        </div>
      </header>
      <div className="flex h-[34px] shrink-0 items-center border-b border-[#2a2a2a] border-t border-t-[#666]">
        <div className="flex h-[22px] w-[62px] items-center border-r border-[#3a3a3a] pl-[5px] text-[#d6d6d6]">
          <span className="h-5 w-[3px] bg-[repeating-linear-gradient(#2b2b2b_0_1px,transparent_1px_2px)]" />
          <svg className="ml-3.5 h-5 w-5" viewBox="0 0 21 21" fill="currentColor">{moveIcon}</svg>
          <svg className="ml-2 h-[3px] w-[5px]" viewBox="0 0 5 3"><path d="M0 0h5L2.500 3z" fill="#fff" /></svg>
        </div>
        <p className="ml-[414px] text-[10px] text-white">Click and drag to reposition the gradient.</p>
        <button type="button" className="ml-auto mr-2 flex h-[19px] w-[120px] items-center justify-between border border-[#404040] bg-[#5c5c5c] pl-[7px] pr-1 text-[10px] text-[#b0b0b0]">
          Essentials
          <svg className="h-2 w-[5px]" viewBox="0 0 5 8"><path d="M0 3h5L2.500 0zM0 5h5L2.500 8z" fill="#aaa" /></svg>
        </button>
      </div>
      <div className="flex min-h-0 flex-1">
        <Toolbar />
        <Workspace />
        <Dock />
      </div>
      <Taskbar />
      <LayerStyleDialog />
      <svg className="pointer-events-none absolute inset-0 size-full" fill="none" stroke="#d01c1c" strokeWidth="2">
        <path d={smooth(leftLoop)} />
        <path d={smooth(rightLoop)} />
      </svg>
    </div>
  );
}
